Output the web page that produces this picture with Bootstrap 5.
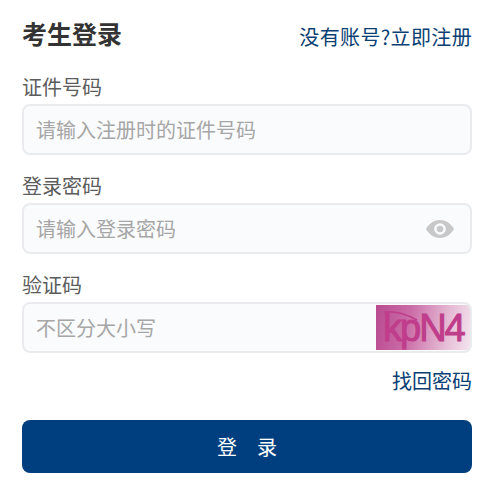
<!DOCTYPE html>
<html lang="zh-CN">
<head>
<meta charset="utf-8">
<title>考生登录</title>
<link href="https://cdn.jsdelivr.net/npm/bootstrap@5.3.0/dist/css/bootstrap.min.css" rel="stylesheet">
<style>
html,body{height:100%;overflow:hidden}
body{background:#fff;font-family:"Noto Sans CJK SC","Liberation Sans",sans-serif;font-size:20px;color:#555}
.login-wrap{padding:13px 28px 0 22px}
.login-head{height:42px;margin-bottom:17px}
.login-title{font-size:25px;font-weight:700;color:#333;line-height:40px;margin:0}
.login-link{color:#0b3f73;font-size:20px;line-height:28px;text-decoration:none;margin-top:10px;letter-spacing:.35px}
.field-label{display:block;font-size:20px;line-height:30px;color:#5c5c5c;margin:0 0 2px}
.field-box{height:51px;background:#fafbfd;border:2px solid #e9ebef;border-radius:8px;margin-bottom:16px;overflow:hidden}
.field-box input{flex:1 1 auto;min-width:0;border:0;outline:0;background:transparent;font-size:20px;padding:0 13px 0 12px;color:#555;font-family:inherit}
.field-box input::placeholder{color:#a6a6a6;opacity:1}
.eye-ico{width:30px;height:20px;margin-right:15px;flex:none}
.captcha-pic{width:94px;height:45px;flex:none;background:linear-gradient(100deg,#b94a90 0%,#cb6ca7 35%,#e6bdd6 75%,#f3e4ed 100%);display:block}
.captcha-pic text{font:400 38px "Liberation Sans",sans-serif;fill:#bf3d8a;stroke:#bf3d8a;stroke-width:1;letter-spacing:-2px}
.forgot-row{height:28px;margin-top:-3px;margin-bottom:26px}
.forgot-row a{color:#0b3f73;text-decoration:none;font-size:20px;line-height:28px}
.login-btn{height:53px;background:#003f7f;border:0;border-radius:8px;color:#fff;font-size:20px;line-height:53px;padding:0}
.login-btn:hover{background:#003f7f;color:#fff}
</style>
</head>
<body>
<div class="login-wrap">
  <div class="login-head d-flex justify-content-between align-items-start">
    <h1 class="login-title">考生登录</h1>
    <a class="login-link" href="#">没有账号?立即注册</a>
  </div>
  <label class="field-label" for="a1">证件号码</label>
  <div class="field-box d-flex align-items-center"><input id="a1" placeholder="请输入注册时的证件号码"></div>
  <label class="field-label" for="a2">登录密码</label>
  <div class="field-box d-flex align-items-center">
    <input id="a2" placeholder="请输入登录密码">
    <svg class="eye-ico" viewBox="0 0 30 20"><path fill="#c8c8c8" fill-rule="evenodd" d="M15 1C8 1 3 6 1 10c2 4 7 9 14 9s12-5 14-9c-2-4-7-9-14-9zm0 3.200a5.800 5.800 0 1 1 0 11.600a5.800 5.800 0 0 1 0-11.600z"/><circle cx="15" cy="10" r="3.300" fill="#c8c8c8"/></svg>
  </div>
  <label class="field-label" for="a3">验证码</label>
  <div class="field-box d-flex align-items-center">
    <input id="a3" placeholder="不区分大小写">
    <svg class="captcha-pic" viewBox="0 0 94 45">
      <path d="M8 7C18 6 30 9 41 15" fill="none" stroke="#bf3d8a" stroke-width="1.500"/>
      <text x="7" y="36">kpN4</text>
    </svg>
  </div>
  <div class="forgot-row text-end"><a href="#">找回密码</a></div>
  <button class="btn login-btn w-100" type="button">登&emsp;录</button>
</div>
<script src="https://cdn.jsdelivr.net/npm/bootstrap@5.3.0/dist/js/bootstrap.bundle.min.js"></script>
</body>
</html>
